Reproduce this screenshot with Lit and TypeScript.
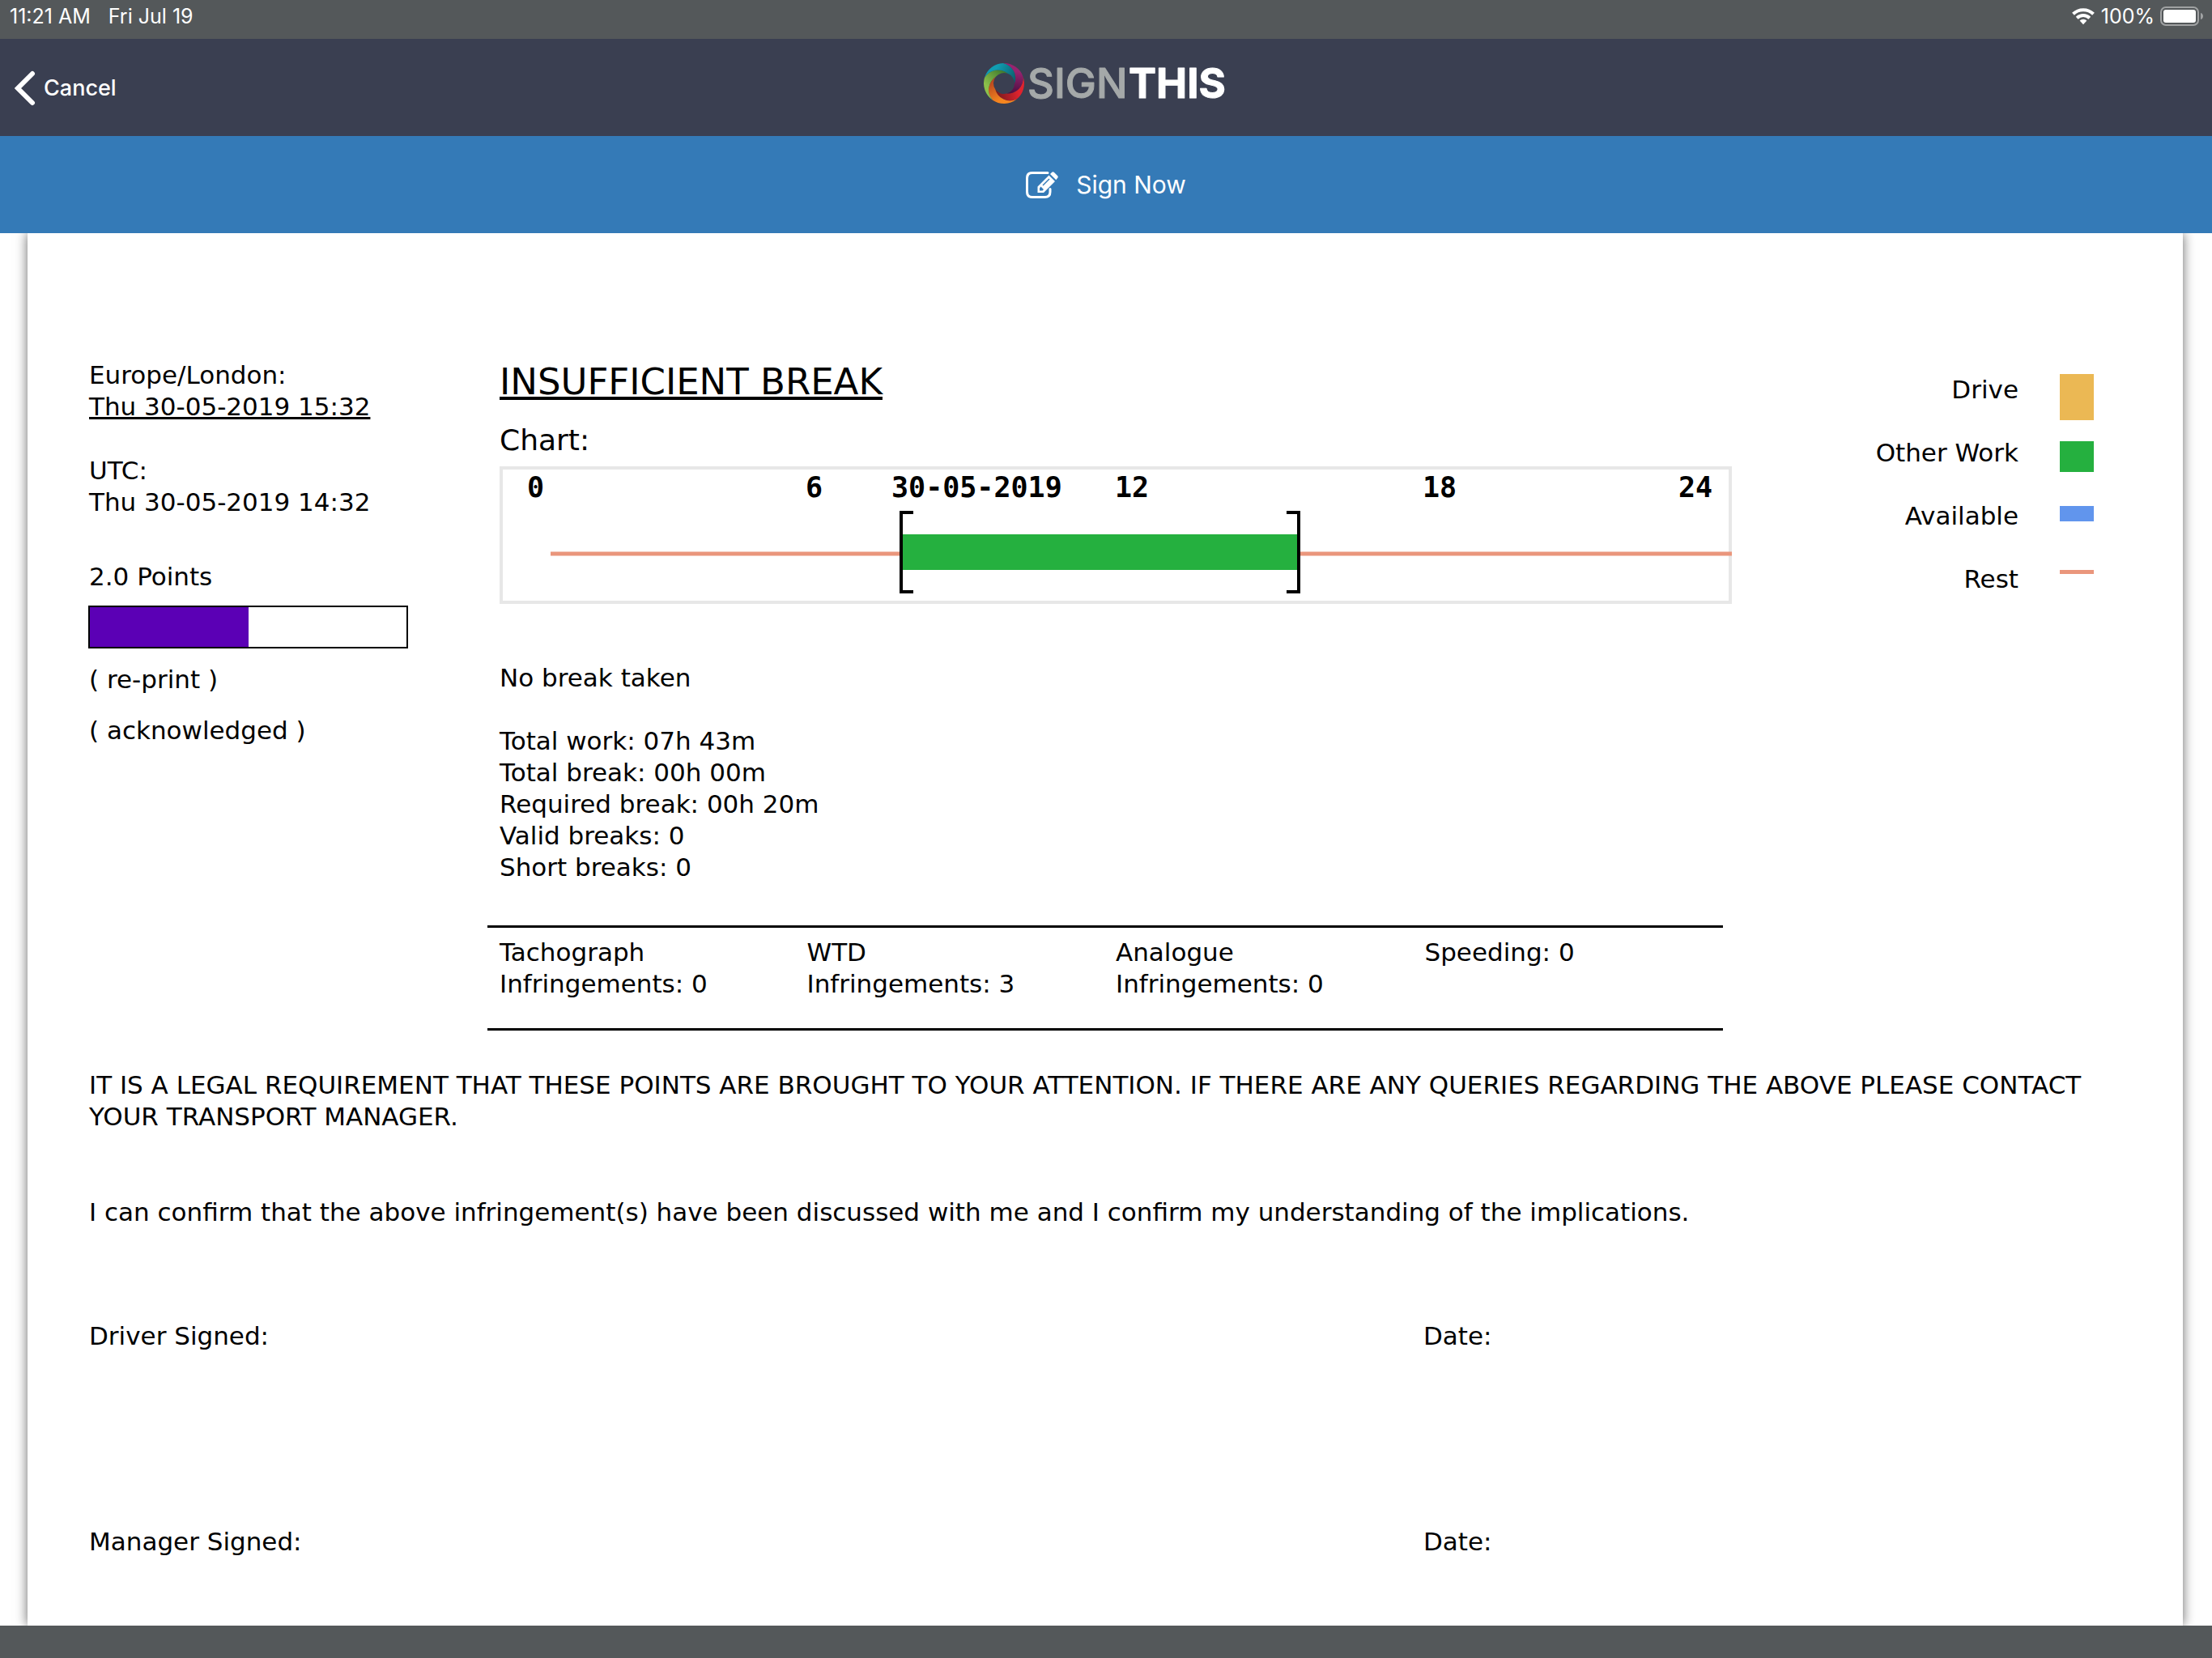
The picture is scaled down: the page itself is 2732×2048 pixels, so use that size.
import { LitElement, html, svg, css } from "lit";
import { customElement } from "lit/decorators.js";

interface LegendItem {
  label: string;
  color: string;
  top: number;
  height: number;
}

const LEGEND: LegendItem[] = [
  { label: "Drive", color: "#ebb854", top: 0, height: 57 },
  { label: "Other Work", color: "#25b03f", top: 5, height: 38 },
  { label: "Available", color: "#6195ed", top: 7, height: 19 },
  { label: "Rest", color: "#ea967c", top: 8, height: 5 },
];

const BREAKDOWN = [
  "Total work: 07h 43m",
  "Total break: 00h 00m",
  "Required break: 00h 20m",
  "Valid breaks: 0",
  "Short breaks: 0",
];

const COUNTS: string[][] = [
  ["Tachograph", "Infringements: 0"],
  ["WTD", "Infringements: 3"],
  ["Analogue", "Infringements: 0"],
  ["Speeding: 0"],
];

const HOURS = [
  { x: 34, text: "0" },
  { x: 378, text: "6" },
  { x: 484, text: "30-05-2019" },
  { x: 760, text: "12" },
  { x: 1140, text: "18" },
  { x: 1456, text: "24" },
];

const BLADES = [
  { start: -20, light: "#e0232e", dark: "#7d1a1d" },
  { start: 52, light: "#f6861f", dark: "#b5441f" },
  { start: 124, light: "#8cc04a", dark: "#3f7a2e" },
  { start: 196, light: "#119db2", dark: "#0a5f6c" },
  { start: 268, light: "#97236f", dark: "#4c0f42" },
];

const polar = (radius: number, degrees: number) => {
  const a = (degrees * Math.PI) / 180;
  return [28 + radius * Math.cos(a), 28 + radius * Math.sin(a)].map((n) => n.toFixed(2));
};

// One blade runs along the rim, then spirals in to the edge of the hole.
const bladePath = (a: number) => {
  const p = (r: number, d: number) => polar(r, d).join(" ");
  return (
    `M${p(25, a)}A25 25 0 0 1 ${p(25, a + 72)}A19 19 0 0 1 ${p(13, a + 167)}` +
    `A13 13 0 0 0 ${p(13, a + 95)}A19 19 0 0 0 ${p(25, a)}Z`
  );
};

@customElement("sign-logo")
export class SignLogo extends LitElement {
  static styles = css`
    :host {
      display: block;
    }
    .logo {
      display: block;
      width: 308px;
      height: 76px;
    }
    .word {
      font-family: Inter, "Liberation Sans", sans-serif;
      font-size: 51px;
      stroke-linejoin: round;
      stroke-width: 1px;
    }
    .sign {
      font-weight: 500;
      fill: #a5a9a9;
      stroke: #a5a9a9;
    }
    .this {
      font-weight: 700;
      fill: #fff;
      stroke: #fff;
    }
  `;

  render() {
    return html`
      <svg class="logo" viewBox="0 -10 308 76" role="img" aria-label="SignThis">
        <defs>
          ${BLADES.map((b, i) => {
            const [x1, y1] = polar(25, b.start + 30);
            const [x2, y2] = polar(14, b.start + 150);
            return svg`<linearGradient id="b${i}" gradientUnits="userSpaceOnUse" x1=${x1} y1=${y1} x2=${x2} y2=${y2}>
              <stop offset="0.2" stop-color=${b.light}></stop>
              <stop offset="1" stop-color=${b.dark}></stop>
            </linearGradient>`;
          })}
        </defs>
        ${BLADES.map((b, i) => svg`<path d=${bladePath(b.start)} fill="url(#b${i})"></path>`)}
        <text class="word sign" x="57" y="46">SIGN</text>
        <text class="word this" x="182" y="46">THIS</text>
      </svg>
    `;
  }
}

@customElement("activity-chart")
export class ActivityChart extends LitElement {
  static styles = css`
    :host {
      display: block;
    }
    .chart {
      display: block;
      width: 100%;
      height: auto;
    }
    .hour {
      font: 700 35px "DejaVu Sans Mono", "Liberation Mono", monospace;
      fill: #000;
    }
  `;

  render() {
    return html`
      <svg class="chart" viewBox="0 0 1522 170" role="img" aria-label="Activity chart">
        <rect x="2" y="2" width="1518" height="166" fill="#fff" stroke="#e7e7e7" stroke-width="4"></rect>
        ${HOURS.map((h) => svg`<text class="hour" x=${h.x} y="38">${h.text}</text>`)}
        <path d="M63 108H1522" stroke="#ea967c" stroke-width="5"></path>
        <rect x="496" y="84" width="489" height="44" fill="#25b03f"></rect>
        <path
          d="M511 57H496V155H511M972 57H987V155H972"
          fill="none"
          stroke="#000"
          stroke-width="4"
        ></path>
      </svg>
    `;
  }
}

@customElement("app-root")
export class AppRoot extends LitElement {
  static styles = css`
    :host {
      display: flex;
      flex-direction: column;
      min-height: 100vh;
      background: #fff;
      color: #000;
      font: 31px/39px "DejaVu Sans", sans-serif;
    }
    p,
    h1,
    h2 {
      margin: 0;
      font-weight: 400;
    }
    svg {
      display: block;
    }
    button {
      margin: 0;
      border: 0;
      background: none;
      color: #fff;
      cursor: pointer;
    }
    .status {
      display: flex;
      justify-content: space-between;
      align-items: center;
      height: 48px;
      padding: 0 10px 8px 12px;
      box-sizing: border-box;
      background: #54585a;
      color: #fff;
      font: 400 25px/32px Inter, "Liberation Sans", sans-serif;
    }
    .group {
      display: flex;
      align-items: center;
    }
    .left {
      gap: 22px;
    }
    .right {
      gap: 7px;
    }
    .nav {
      display: grid;
      grid-template-columns: 1fr auto 1fr;
      height: 120px;
      background: #3a3f51;
    }
    .cancel {
      display: flex;
      align-items: center;
      justify-self: start;
      gap: 10px;
      padding: 2px 18px 0;
      font: 500 27px/34px Inter, "Liberation Sans", sans-serif;
    }
    .brand {
      padding-top: 17px;
    }
    .sign-now {
      display: flex;
      align-items: center;
      justify-content: center;
      gap: 22px;
      height: 120px;
      padding: 0;
      background: #347ab7;
      font: 400 30px/38px Inter, "Liberation Sans", sans-serif;
    }
    .viewer {
      display: flex;
      flex: 1;
      padding: 0 36px 0 34px;
      overflow: hidden;
    }
    .page {
      flex: 1;
      padding: 156px 76px 84px;
      box-shadow: 0 0 14px rgba(0, 0, 0, 0.6);
      clip-path: inset(0 -34px);
    }
    .report {
      display: grid;
      grid-template-columns: 492fr 1537fr 481fr;
    }
    .underlined {
      text-decoration: underline;
    }
    .utc {
      margin-top: 40px;
    }
    .points {
      margin-top: 53px;
    }
    .meter {
      width: 395px;
      height: 53px;
      margin: 16px 0 19px -1px;
      border: 2px solid #000;
      box-sizing: border-box;
    }
    .fill {
      height: 100%;
      background: #5b00b5;
    }
    .ack {
      margin-top: 24px;
    }
    .inset {
      padding-left: 15px;
    }
    .title {
      font-size: 45px;
      line-height: 56px;
      text-decoration: underline;
    }
    .subtitle {
      margin: 23px 0 11px;
      font-size: 36px;
      line-height: 42px;
    }
    .reason {
      margin: 72px 0 39px;
    }
    .counts {
      width: calc(100% - 11px);
      margin-top: 52px;
      border-collapse: separate;
      border-spacing: 0;
      border: solid #000;
      border-width: 3px 0;
      table-layout: fixed;
    }
    .counts td {
      padding: 11px 0 35px 13px;
      vertical-align: top;
    }
    .counts td:first-child {
      padding-left: 15px;
    }
    .legend {
      margin: 0;
      padding: 18px 34px 0 0;
      list-style: none;
    }
    .legend li {
      display: flex;
      justify-content: flex-end;
      gap: 51px;
      height: 78px;
    }
    .legal {
      margin-top: 48px;
    }
    .confirm {
      margin-top: 79px;
    }
    .signature {
      display: grid;
      grid-template-columns: 1648fr 862fr;
      margin-top: 114px;
    }
    .signature + .signature {
      margin-top: 215px;
    }
    .footer {
      height: 40px;
      background: #54585a;
    }
  `;

  render() {
    return html`
      <header class="status">
        <div class="group left"><span>11:21 AM</span><span>Fri Jul 19</span></div>
        <div class="group right">
          <svg width="30" height="22" viewBox="0 0 30 22" aria-hidden="true">
            <g fill="none" stroke="#fff" stroke-width="4">
              <path d="M2.5 8.2A18 18 0 0 1 27.5 8.2"></path>
              <path d="M7.2 13.2A11.3 11.3 0 0 1 22.8 13.2"></path>
            </g>
            <path d="M10.6 16.6A6.4 6.4 0 0 1 19.4 16.6L15 21.2Z" fill="#fff"></path>
          </svg>
          <span>100%</span>
          <svg width="54" height="24" viewBox="0 0 54 24" aria-hidden="true">
            <rect x="1" y="1" width="46" height="22" rx="6" fill="none" stroke="#a0a2a3" stroke-width="2"></rect>
            <rect x="4" y="4" width="40" height="16" rx="3" fill="#fff"></rect>
            <path d="M50 8C54 9 54 15 50 16Z" fill="#a0a2a3"></path>
          </svg>
        </div>
      </header>

      <nav class="nav">
        <button class="cancel" type="button">
          <svg width="26" height="44" viewBox="0 0 26 44" aria-hidden="true">
            <path
              d="M22 4L4 22L22 40"
              fill="none"
              stroke="#fff"
              stroke-width="6"
              stroke-linecap="round"
            ></path>
          </svg>
          Cancel
        </button>
        <sign-logo class="brand"></sign-logo>
      </nav>

      <button class="sign-now" type="button">
        <svg width="40" height="34" viewBox="0 0 40 34" aria-hidden="true">
          <path
            d="M27 2.5H8Q1.5 2.500 1.5 9V26Q1.5 32.5 8 32.5H23.5Q30 32.5 30 26V22.5"
            fill="none"
            stroke="#fff"
            stroke-width="3"
            stroke-linecap="round"
          ></path>
          <path
            fill="#fff"
            fill-rule="evenodd"
            d="M14.5 19.5L28.5 5.5L36 13L22 27H14.5ZM17 21.5V24.5H20.5L22 23L18.5 19.5ZM20.5 17.5L21.5 18.5L29.5 10.5L28.5 9.5Z"
          ></path>
          <path fill="#fff" d="M30 4L32 2Q33.5 .5 35 2L39 6Q40.5 7.5 39 9L37.3 11.2Z"></path>
        </svg>
        Sign Now
      </button>

      <main class="viewer">
        <article class="page">
          <div class="report">
            <section>
              <p>Europe/London:</p>
              <p><span class="underlined">Thu 30-05-2019 15:32</span></p>
              <p class="utc">UTC:</p>
              <p>Thu 30-05-2019 14:32</p>
              <p class="points">2.0 Points</p>
              <div
                class="meter"
                role="meter"
                aria-label="Points"
                aria-valuemin="0"
                aria-valuemax="4"
                aria-valuenow="2"
              >
                <div class="fill" style="width: 50%"></div>
              </div>
              <p>( re-print )</p>
              <p class="ack">( acknowledged )</p>
            </section>

            <section>
              <div class="inset">
                <h1 class="title">INSUFFICIENT BREAK</h1>
                <h2 class="subtitle">Chart:</h2>
                <activity-chart></activity-chart>
                <p class="reason">No break taken</p>
                ${BREAKDOWN.map((line) => html`<p>${line}</p>`)}
              </div>
              <table class="counts">
                <tbody>
                  <tr>
                    ${COUNTS.map(
                      (lines) => html`<td>${lines.map((line) => html`<div>${line}</div>`)}</td>`
                    )}
                  </tr>
                </tbody>
              </table>
            </section>

            <ul class="legend">
              ${LEGEND.map(
                (item) => html`
                  <li>
                    <span>${item.label}</span>
                    <svg width="42" height="78" viewBox="0 0 42 78" aria-hidden="true">
                      <rect y=${item.top} width="42" height=${item.height} fill=${item.color}></rect>
                    </svg>
                  </li>
                `
              )}
            </ul>
          </div>

          <p class="legal">
            IT IS A LEGAL REQUIREMENT THAT THESE POINTS ARE BROUGHT TO YOUR ATTENTION. IF THERE ARE
            ANY QUERIES REGARDING THE ABOVE PLEASE CONTACT YOUR TRANSPORT MANAGER.
          </p>
          <p class="confirm">
            I can confirm that the above infringement(s) have been discussed with me and I confirm
            my understanding of the implications.
          </p>
          <div class="signature"><span>Driver Signed:</span><span>Date:</span></div>
          <div class="signature"><span>Manager Signed:</span><span>Date:</span></div>
        </article>
      </main>
      <footer class="footer"></footer>
    `;
  }
}
